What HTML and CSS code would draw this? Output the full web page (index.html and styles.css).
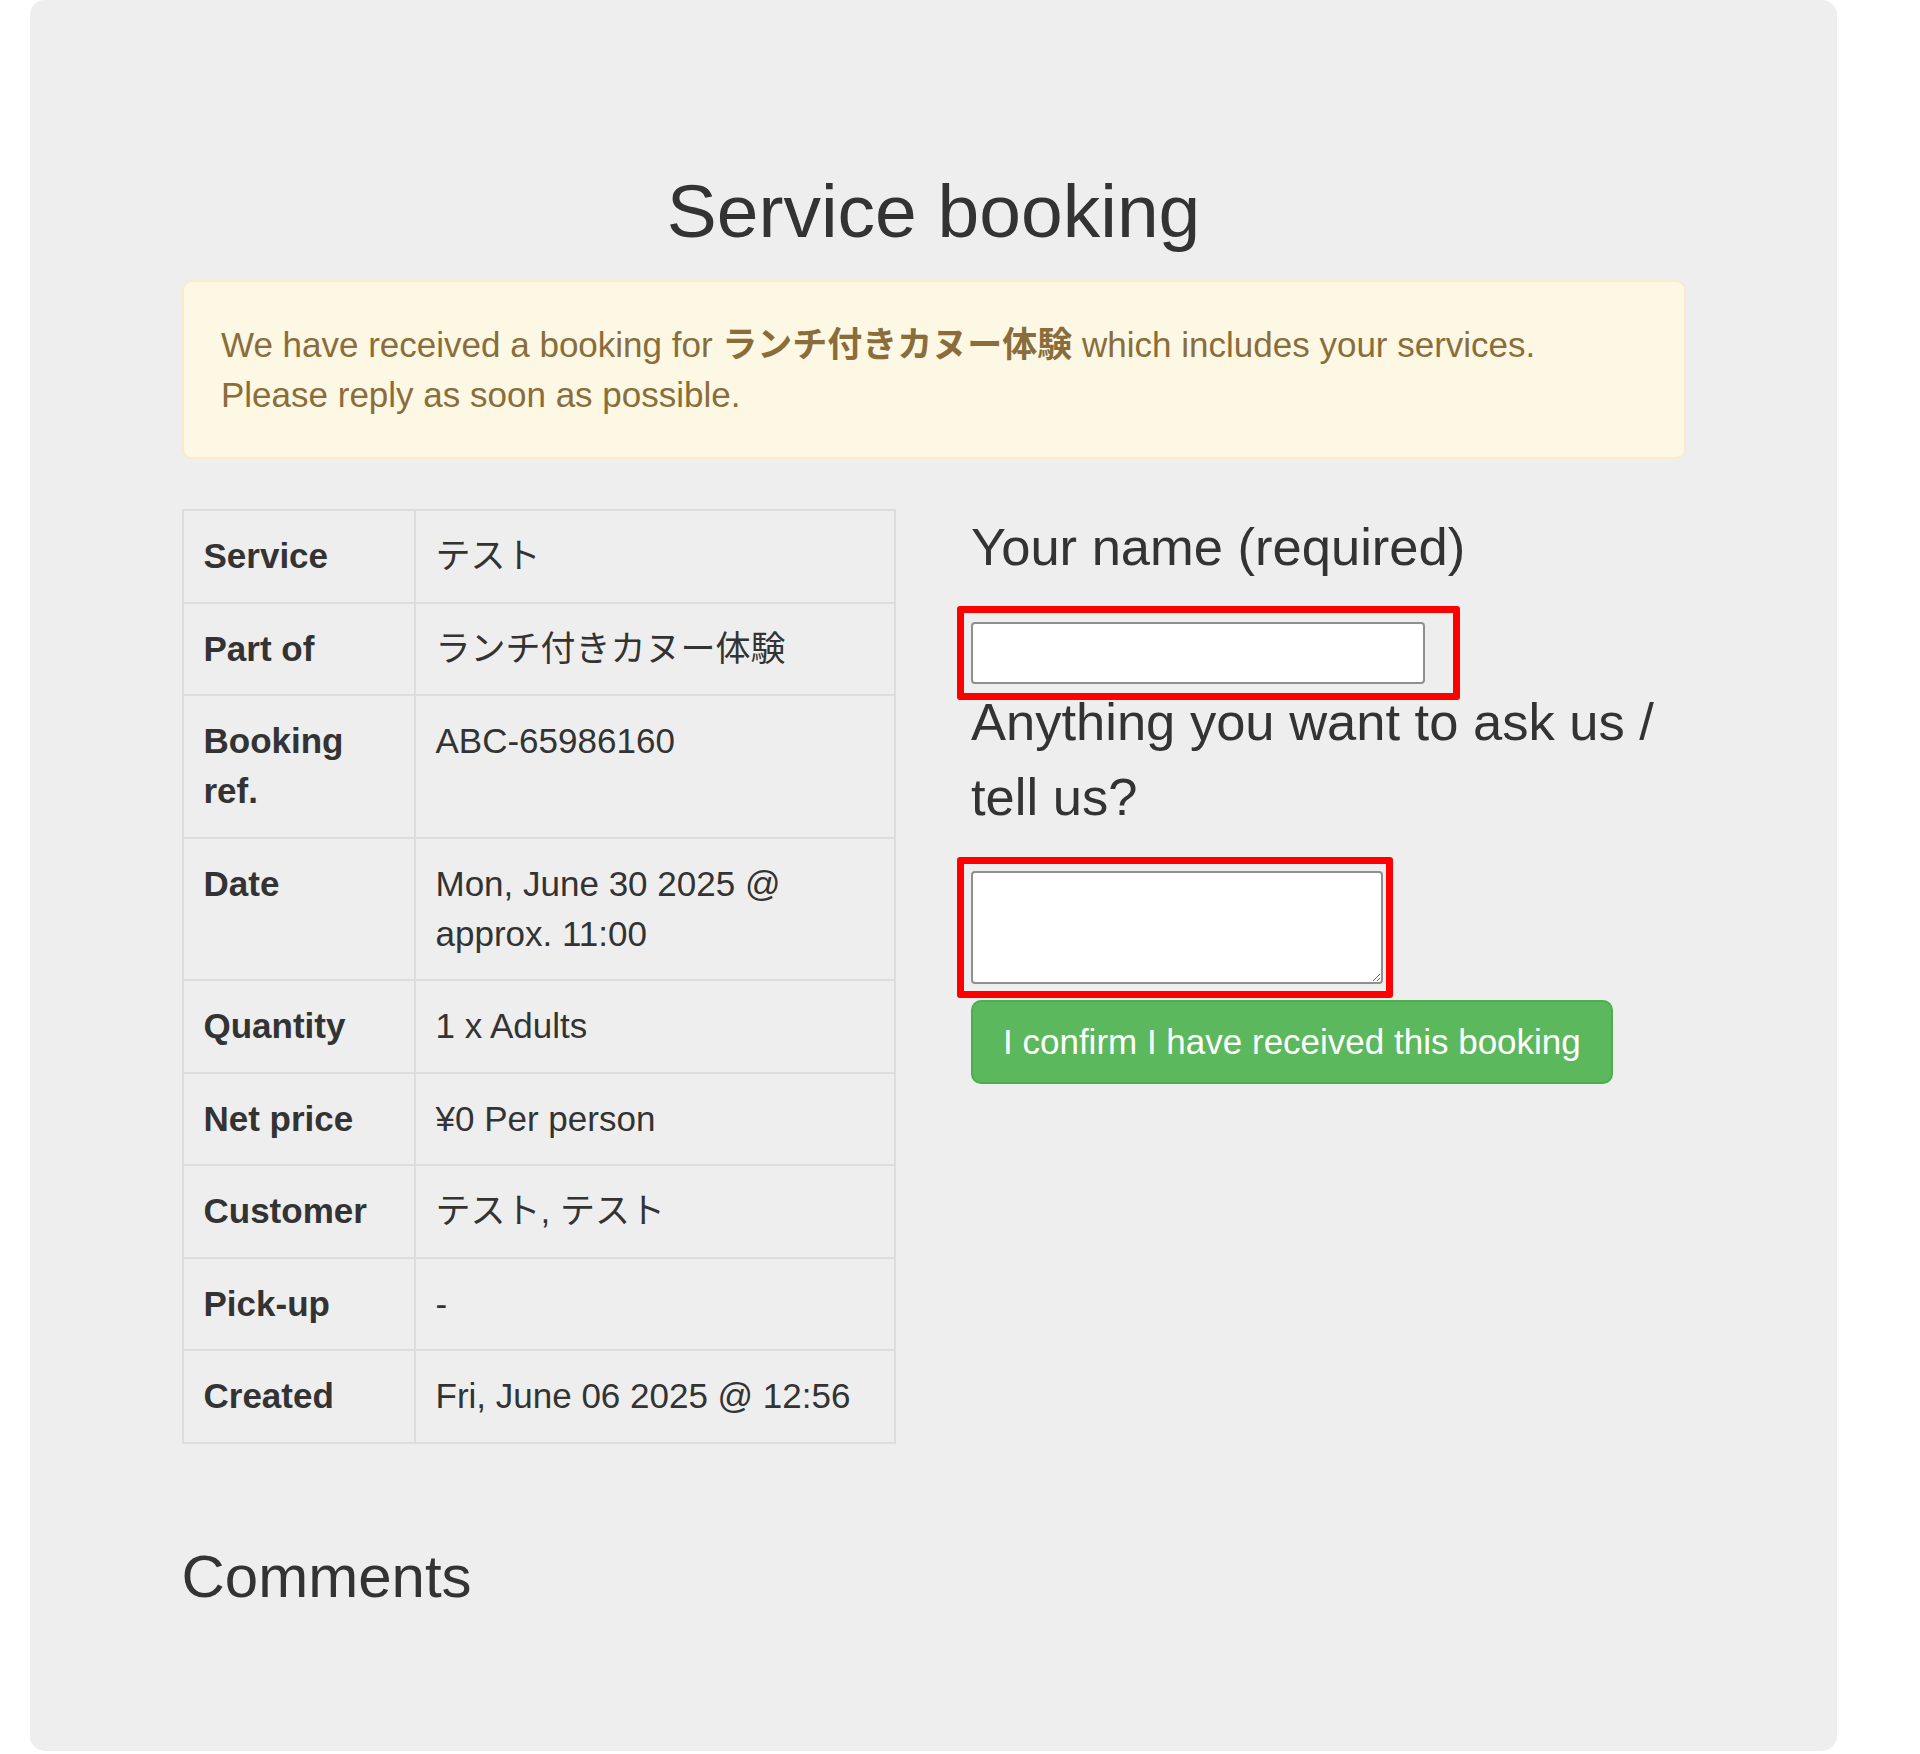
FILE: index.html
```html
<!doctype html>
<html lang="en">
<head>
    <meta charset="UTF-8">
    <title>Service booking</title>
    <link rel="stylesheet" href="styles.css">
</head>
<body>
<div class="panel">
    <div class="inner">

        <h2 class="title">Service booking</h2>

        <div class="alert">
            We have received a booking for <b>ランチ付きカヌー体験</b> which includes your services.<br>
            Please reply as soon as possible.
        </div>

        <div class="row">
            <!--予約内容-->
            <table class="details">
                <tr><th>Service</th><td>テスト</td></tr>
                <tr><th>Part of</th><td>ランチ付きカヌー体験</td></tr>
                <tr><th>Booking ref.</th><td>ABC-65986160</td></tr>
                <tr><th>Date</th><td>Mon, June 30 2025 @ approx. 11:00</td></tr>
                <tr><th>Quantity</th><td>1 x Adults</td></tr>
                <tr><th>Net price</th><td>¥0 Per person</td></tr>
                <tr><th>Customer</th><td>テスト, テスト</td></tr>
                <tr><th>Pick-up</th><td>-</td></tr>
                <tr><th>Created</th><td>Fri, June 06 2025 @ 12:56</td></tr>
            </table>

            <form class="reply" action="">
                <p class="question">Your name (required)</p>
                <div class="field">
                    <input type="text" class="name-input" id="name">
                    <span class="mark mark-name"></span>
                </div>

                <p class="question">Anything you want to ask us / tell us?</p>
                <div class="field field-message">
                    <textarea class="message-input" id="message"></textarea>
                    <span class="mark mark-message"></span>
                </div>

                <button type="submit" class="btn-confirm">I confirm I have received this booking</button>
            </form>
        </div>

        <h3 class="comments">Comments</h3>

    </div>
</div>
</body>
</html>
```

FILE: styles.css
```css
body {
    margin: 0;
    background: #fff;
    color: #333;
    font-family: "Liberation Sans", Arial, "Noto Sans CJK JP", sans-serif;
    font-size: 35px;
    line-height: 50px;
}

.panel {
    width: 1807px;
    margin-left: 30px;
    box-sizing: border-box;
    padding: 120px 0 116px;
    background: #eeeeee;
    border-radius: 15px;
}

.inner {
    width: 1504px;
    margin: 0 auto;
}

.title {
    margin: 50px 0 27.5px;
    font-size: 75px;
    line-height: 82.5px;
    font-weight: normal;
    text-align: center;
}

.alert {
    padding: 37.5px;
    margin-bottom: 50px;
    background: #fcf8e3;
    border: 2.5px solid #faebcc;
    border-radius: 10px;
    color: #8a6d3b;
}

.row {
    display: grid;
    grid-template-columns: 1fr 1fr;
    column-gap: 75px;
    align-items: start;
}

/*テーブル*/
.details {
    width: 100%;
    margin-bottom: 50px;
    border-collapse: collapse;
}

.details th, .details td {
    padding: 20px 20px 20.5px;
    border: 2px solid #dddddd;
    text-align: left;
    vertical-align: top;
}

.details th {
    width: 190px;
    font-weight: bold;
}

/*右側のフォーム*/
.question {
    margin: 0 0 37.5px;
    font-size: 52.5px;
    line-height: 75px;
}

.field {
    position: relative;
    width: fit-content;
}

.field-message {
    margin-top: 2.5px;
}

.name-input {
    display: block;
    width: 454px;
    height: 62px;
    box-sizing: border-box;
    border: 2.5px solid #8f8f8f;
    border-radius: 4px;
    background: #fff;
    font-size: 35px;
}

.message-input {
    display: block;
    width: 412px;
    height: 113px;
    box-sizing: border-box;
    margin: 0;
    border: 2.5px solid #8f8f8f;
    border-radius: 4px;
    background: #fff;
    font-size: 35px;
}

/*赤枠*/
.mark {
    position: absolute;
    border: 7px solid #ff0000;
    border-radius: 3px;
    pointer-events: none;
}

.mark-name {
    left: -14px;
    top: -16px;
    right: -35px;
    bottom: -16px;
}

.mark-message {
    left: -14px;
    top: -14px;
    right: -10px;
    bottom: -14px;
}

.btn-confirm {
    display: block;
    margin-top: 16px;
    padding: 15px 30px;
    background: #5cb85c;
    border: 2.5px solid #4cae4c;
    border-radius: 10px;
    color: #fff;
    font-family: "Liberation Sans", Arial, sans-serif;
    font-size: 35px;
    line-height: 50px;
}

.comments {
    margin: 50px 0 25px;
    font-size: 60px;
    line-height: 66px;
    font-weight: normal;
}
```
